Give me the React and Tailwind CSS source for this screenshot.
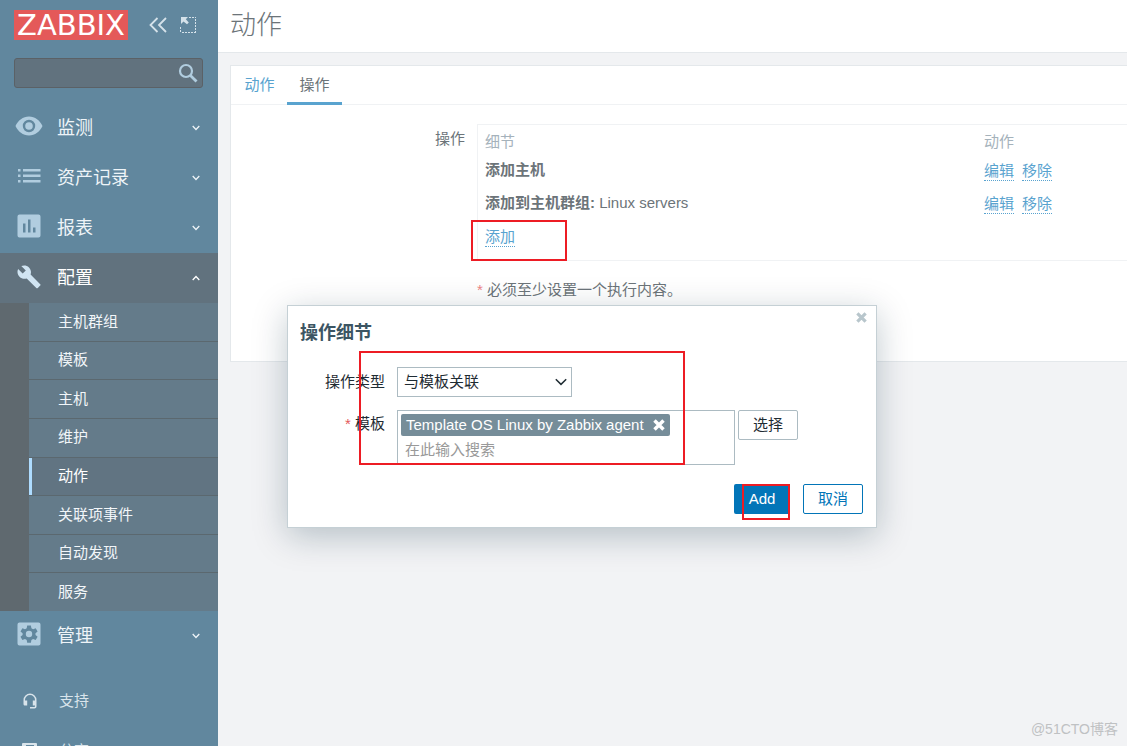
import React, { useState } from 'react';

const sections = [
  { label: '监测', icon: 'eye' },
  { label: '资产记录', icon: 'list' },
  { label: '报表', icon: 'chart' },
  { label: '配置', icon: 'wrench', open: true },
];

const configItems = ['主机群组', '模板', '主机', '维护', '动作', '关联项事件', '自动发现', '服务'];

const operations = [
  { title: '添加主机', value: '' },
  { title: '添加到主机群组:', value: 'Linux servers' },
];

const icons = {
  eye: (
    <path
      fillRule="evenodd"
      d="M14 4.5C8 4.5 3 8.500 .5 14c2.500 5.500 7.500 9.500 13.500 9.500S25 19.500 27.500 14C25 8.500 20 4.500 14 4.500zM14 20.200a6.200 6.200 0 1 1 0-12.400 6.200 6.200 0 0 1 0 12.400zM14 10.200a3.800 3.800 0 1 0 0 7.600 3.800 3.800 0 0 0 0-7.600z"
    />
  ),
  list: (
    <path d="M3 7h2.500v2.500H3zM8 7h17.500v2.500H8zM3 12.500h2.500V15H3zM8 12.500h17.500V15H8zM3 18h2.500v2.500H3zM8 18h17.500v2.500H8z" />
  ),
  chart: (
    <path
      fillRule="evenodd"
      d="M4.500 2.500h19a2 2 0 0 1 2 2v19a2 2 0 0 1-2 2h-19a2 2 0 0 1-2-2v-19a2 2 0 0 1 2-2zM8 11.500v9h2.500v-9zM13 7.500v13h2.500v-13zM18 15.500v5h2.500v-5z"
    />
  ),
  wrench: (
    <path d="M25.200 22.200 15.600 12.600c.9-2.400.4-5.200-1.600-7.200-2.100-2.100-5.200-2.500-7.700-1.400l4.500 4.500-3.100 3.100L3.100 7.100C1.900 9.600 2.400 12.700 4.500 14.800c2 2 4.800 2.500 7.200 1.600l9.600 9.600c.4.4 1.100.4 1.500 0l2.400-2.400c.5-.4.5-1.100 0-1.400z" />
  ),
  gear: (
    <path
      fillRule="evenodd"
      d="M4.500 2.500h19a2 2 0 0 1 2 2v19a2 2 0 0 1-2 2h-19a2 2 0 0 1-2-2v-19a2 2 0 0 1 2-2zM12.200 5.500l-.5 2.700-1.700 1-2.600-.9-1.900 3.200 2.100 1.700v1.700l-2.100 1.800 1.900 3.200 2.600-.9 1.700 1 .5 2.700h3.700l.5-2.700 1.700-1 2.600.9 1.900-3.200-2.100-1.800v-1.700l2.100-1.700-1.900-3.200-2.600.9-1.700-1-.5-2.700zM14 10.800a3.200 3.200 0 1 1 0 6.400 3.200 3.200 0 0 1 0-6.400z"
    />
  ),
};

const Chevron = ({ up }) => (
  <svg width="8" height="6" viewBox="0 0 8 6" fill="none" stroke="currentColor" strokeWidth="1.300">
    <path d={up ? 'M.7 5 4 1.500 7.300 5' : 'M.7 1 4 4.500 7.300 1'} />
  </svg>
);

const SectionLink = ({ label, icon, open }) => (
  <a
    href="#"
    className={`flex h-[50px] items-center pl-[15px] pr-[18px] text-lg ${
      open ? 'bg-[#61727e] text-white' : 'text-[#eef4f8]'
    }`}
  >
    <svg
      width="28"
      height="28"
      viewBox="0 0 28 28"
      fill="currentColor"
      className={open ? 'mb-1 text-[#d0e4f2]' : 'mb-1 text-[#b1cddf]'}
    >
      {icons[icon]}
    </svg>
    <span className="ml-[14px] flex-1">{label}</span>
    <Chevron up={open} />
  </a>
);

const Sidebar = () => (
  <aside className="flex h-screen w-[218px] shrink-0 flex-col overflow-hidden bg-[#61879e]">
    <div className="flex shrink-0 items-center px-[14px] pt-[10px]">
      <a
        href="#"
        className="flex h-[30px] w-[114px] items-center justify-center bg-[#e45959] font-['DejaVu_Sans'] text-[29px] leading-[30px] text-white"
      >
        ZABBIX
      </a>
      <button type="button" aria-label="收起侧边栏" className="ml-[21px] text-[#d5e2ea]">
        <svg width="18" height="16" viewBox="0 0 18 16" fill="none" stroke="currentColor" strokeWidth="1.800">
          <path d="M8.500 1 1.500 8l7 7M17 1l-7 7 7 7" />
        </svg>
      </button>
      <button type="button" aria-label="隐藏侧边栏" className="ml-[13px] text-[#d5e2ea]">
        <svg width="16" height="16" viewBox="0 0 16 16" fill="none" stroke="currentColor">
          <path d="M9 .5h7M15.500 2v14M.5 10v6M2 15.500h13" strokeDasharray="2 1" />
          <path d="M1 0h7L5.800 2.200 8.800 5.500 7 7.300 3.500 4.500 1 7z" fill="currentColor" stroke="none" />
        </svg>
      </button>
    </div>

    <form className="mx-[14px] mt-[18px] mb-[15px] flex h-[30px] w-[189px] shrink-0 items-center rounded-[3px] border border-[#5b6166] bg-[#61727e] pr-1">
      <input type="text" aria-label="搜索" className="min-w-0 flex-1 bg-transparent px-2 text-white outline-none" />
      <button type="button" aria-label="搜索" className="text-[#b1cddf]">
        <svg width="20" height="20" viewBox="0 0 20 20" fill="none" stroke="currentColor" strokeWidth="2.200">
          <circle cx="8" cy="8" r="6" />
          <path d="m12.200 12.200 6.300 6.300" strokeWidth="2.800" />
        </svg>
      </button>
    </form>

    <nav className="shrink-0">
      {sections.map((section) => (
        <SectionLink key={section.label} {...section} />
      ))}

      <ul className="flex h-[308px] flex-col border-l-[29px] border-[#5f696f] bg-[#647b8a]">
        {configItems.map((item) => (
          <li key={item} className="flex flex-1 border-b border-[#5b686f] last:border-b-0">
            <a
              href="#"
              className={`flex flex-1 items-center text-[15px] ${
                item === '动作'
                  ? 'border-l-[3px] border-[#aedcff] bg-[#617482] pl-[26px] text-white'
                  : 'pl-[29px] text-[#f2f6f9]'
              }`}
            >
              {item}
            </a>
          </li>
        ))}
      </ul>

      <SectionLink label="管理" icon="gear" />
    </nav>

    <div className="mt-[15px] shrink-0 text-[15px] text-[#d9e4eb]">
      <a href="#" className="flex h-[50px] items-center pl-[22px]">
        <svg width="16" height="16" viewBox="0 0 16 16" fill="currentColor">
          <path d="M8 .5a6.500 6.500 0 0 0-6.500 6.500v4c0 1 .8 1.500 1.500 1.500h2.200V7.500H3V7a5 5 0 0 1 10 0v.500h-2.200v5H13v.700c0 .5-.3.800-.8.800H8v1.500h4.500c1.200 0 2-.8 2-2V7A6.500 6.500 0 0 0 8 .5z" />
        </svg>
        <span className="ml-[21px]">支持</span>
      </a>
      <a href="#" className="flex h-[50px] items-center pl-[22px]">
        <svg width="16" height="16" viewBox="0 0 16 16" fill="currentColor">
          <path fillRule="evenodd" d="M1 0h13a1 1 0 0 1 1 1v14a1 1 0 0 1-1 1H1a1 1 0 0 1-1-1V1a1 1 0 0 1 1-1zM4 2v2h8V2z" />
        </svg>
        <span className="ml-[21px]">分享</span>
      </a>
    </div>
  </aside>
);

const DottedLink = ({ children }) => (
  <button type="button" className="border-b border-dotted border-[#59a3cf] leading-[19px] text-[#59a3cf]">
    {children}
  </button>
);

const OperationsPanel = () => (
  <section className="ml-3 mt-3 h-[297px] border border-r-0 border-[#e4e8eb] bg-white">
    <div className="flex h-[39px] border-b border-[#f0f2f4] pl-px">
      <button type="button" className="h-[39px] w-[55px] border-b-[3px] border-transparent pt-[2px] text-[#59a3cf]">
        动作
      </button>
      <button type="button" className="h-[39px] w-[55px] border-b-[3px] border-[#59a3cf] pt-[2px]">
        操作
      </button>
    </div>

    <div className="flex pt-[19px]">
      <div className="w-[234px] shrink-0 pt-[5px] text-right leading-5">操作</div>
      <div className="ml-3 flex-1">
        <div className="relative h-[137px] border border-r-0 border-[#f0f2f4] pl-[7px] pt-[5px]">
          <table className="w-full table-fixed text-left">
            <thead>
              <tr className="h-6 text-[#a5b2bb]">
                <th className="font-normal">细节</th>
                <th className="w-[143px] font-normal">动作</th>
              </tr>
            </thead>
            <tbody>
              {operations.map((operation) => (
                <tr key={operation.title} className="h-[33px]">
                  <td>
                    <b>{operation.title}</b> {operation.value}
                  </td>
                  <td>
                    <div className="flex gap-2">
                      <DottedLink>编辑</DottedLink>
                      <DottedLink>移除</DottedLink>
                    </div>
                  </td>
                </tr>
              ))}
              <tr className="h-[34px]">
                <td colSpan={2}>
                  <DottedLink>添加</DottedLink>
                </td>
              </tr>
            </tbody>
          </table>
          <div className="pointer-events-none absolute -left-[7px] top-[95px] h-[41px] w-24 border-2 border-[#ed1c24]" />
        </div>
        <p className="mt-[18px]">
          <span className="text-[#ee8585]">*</span> 必须至少设置一个执行内容。
        </p>
      </div>
    </div>
  </section>
);

const CrossIcon = ({ size }) => (
  <svg width={size} height={size} viewBox="0 0 12 12" fill="none" stroke="currentColor" strokeWidth="3.500">
    <path d="m1.500 1.500 9 9M10.500 1.500l-9 9" />
  </svg>
);

const OperationDialog = () => {
  const [type, setType] = useState('template');
  const [search, setSearch] = useState('');

  return (
    <div
      role="dialog"
      aria-labelledby="dialog-title"
      className="absolute left-[287px] top-[305px] w-[590px] border border-[#c5d0d5] bg-white pb-[13px] pl-3 pr-[13px] text-[#1f2c33] shadow-[0_8px_32px_rgba(0,40,60,0.25)]"
    >
      <button type="button" aria-label="关闭" className="absolute right-[9px] top-[6px] text-[#b8c6cc]">
        <CrossIcon size={11} />
      </button>
      <h4 id="dialog-title" className="pt-[15px] text-lg font-bold leading-6 text-[#3c5563]">
        操作细节
      </h4>

      <div className="mt-[22px] flex">
        <label htmlFor="operation-type" className="w-[85px] text-right leading-[30px]">
          操作类型
        </label>
        <div className="relative ml-3 h-[30px] w-[175px]">
          <select
            id="operation-type"
            value={type}
            onChange={(e) => setType(e.target.value)}
            className="h-full w-full appearance-none border border-[#acbbc2] bg-white pl-[6px] pt-px outline-none"
          >
            <option value="template">与模板关联</option>
          </select>
          <svg
            width="12"
            height="8"
            viewBox="0 0 12 8"
            fill="none"
            stroke="currentColor"
            strokeWidth="1.500"
            className="pointer-events-none absolute right-[5px] top-[11px]"
          >
            <path d="m.8 1.200 5.200 5.200 5.200-5.200" />
          </svg>
        </div>
      </div>

      <div className="mt-[13px] flex items-start">
        <label htmlFor="template-search" className="w-[85px] text-right leading-7">
          <span className="text-[#e45959]">*</span> 模板
        </label>
        <div className="ml-3 h-[55px] w-[338px] border border-[#acbbc2] p-[3px]">
          <span className="flex h-[22px] w-fit items-center rounded-[2px] bg-[#768d99] px-[5px] text-white">
            Template OS Linux by Zabbix agent
            <button type="button" aria-label="移除模板" className="ml-[9px]">
              <CrossIcon size={12} />
            </button>
          </span>
          <input
            id="template-search"
            type="text"
            value={search}
            placeholder="在此输入搜索"
            onChange={(e) => setSearch(e.target.value)}
            className="block h-[26px] w-full pl-1 outline-none placeholder:text-[#999999]"
          />
        </div>
        <button type="button" className="ml-[3px] h-[30px] w-[60px] rounded-[2px] border border-[#acbbc2]">
          选择
        </button>
      </div>

      <div className="mt-[19px] flex justify-end gap-[13px]">
        <button type="button" className="h-[30px] w-14 rounded-[2px] bg-[#0275b8] text-white">
          Add
        </button>
        <button type="button" className="h-[30px] w-[60px] rounded-[2px] border border-[#0275b8] text-[#0275b8]">
          取消
        </button>
      </div>

      <div className="pointer-events-none absolute left-[71px] top-[45px] h-[114px] w-[326px] border-2 border-[#ed1c24]" />
      <div className="pointer-events-none absolute left-[454px] top-[178px] h-9 w-12 border-2 border-[#ed1c24]" />
    </div>
  );
};

const App = () => {
  return (
    <div className="relative flex h-screen overflow-hidden bg-[#f2f3f5] font-['Liberation_Sans','Noto_Sans_CJK_SC',sans-serif] text-[15px] text-[#6c7479]">
      <Sidebar />
      <main className="min-w-0 flex-1">
        <header className="flex h-[53px] items-center border-b border-[#e4e8eb] bg-white pb-[2px] pl-3">
          <h1 className="text-[26px] font-light leading-8">动作</h1>
        </header>
        <OperationsPanel />
      </main>
      <OperationDialog />
      <div className="absolute bottom-[7px] right-[9px] text-sm text-[#bfc1c3]">@51CTO博客</div>
    </div>
  );
};

export default App;
